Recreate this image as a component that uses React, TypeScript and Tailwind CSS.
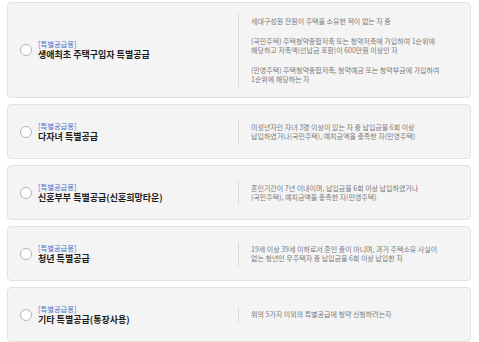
interface ItemProps {
  title: string;
  desc: string[][];
}

const items: ItemProps[] = [
  {
    title: "생애최초 주택구입자 특별공급",
    desc: [
      ["세대구성원 전원이 주택을 소유한 적이 없는 자 중"],
      [
        "(국민주택) 주택청약종합저축 또는 청약저축에 가입하여 1순위에",
        "해당하고 저축액(선납금 포함)이 600만원 이상인 자",
      ],
      [
        "(민영주택) 주택청약종합저축, 청약예금 또는 청약부금에 가입하여",
        "1순위에 해당하는 자",
      ],
    ],
  },
  {
    title: "다자녀 특별공급",
    desc: [
      [
        "미성년자인 자녀 3명 이상이 있는 자 중 납입금을 6회 이상",
        "납입하였거나(국민주택), 예치금액을 충족한 자(민영주택)",
      ],
    ],
  },
  {
    title: "신혼부부 특별공급(신혼희망타운)",
    desc: [
      [
        "혼인기간이 7년 이내이며, 납입금을 6회 이상 납입하였거나",
        "(국민주택), 예치금액을 충족한 자(민영주택)",
      ],
    ],
  },
  {
    title: "청년 특별공급",
    desc: [
      [
        "19세 이상 39세 이하로서 혼인 중이 아니며, 과거 주택소유 사실이",
        "없는 청년인 무주택자 중 납입금을 6회 이상 납입한 자",
      ],
    ],
  },
  {
    title: "기타 특별공급(통장사용)",
    desc: [["위의 5가지 이외의 특별공급에 청약 신청하려는자"]],
  },
];

function Radio() {
  return (
    <span className="w-[12px] h-[12px] rounded-full border border-[#b5b5b5] bg-white shrink-0" />
  );
}

function Card({ title, desc }: ItemProps) {
  return (
    <label className="flex items-center min-h-[55px] py-[14px] bg-[#f4f4f4] border border-[#e2e2e2] rounded-[4px]">
      <div className="flex items-center w-[230px] shrink-0 pl-[12px] gap-[6px]">
        <Radio />
        <div>
          <p className="text-[7.3px] leading-[10px] text-[#4d73c9]">[특별공급용]</p>
          <p className="text-[9px] leading-[12px] font-bold text-[#1e1e1e]">{title}</p>
        </div>
      </div>
      <div className="border-l border-[#dcdcdc] pl-[12px] py-[3px] flex flex-col gap-[11px] text-[7px] leading-[9px] text-[#7a7a7a]">
        {desc.map((para, i) => (
          <p key={i}>
            {para.map((line, j) => (
              <span key={j} className="block">
                {line}
              </span>
            ))}
          </p>
        ))}
      </div>
    </label>
  );
}

export default function App() {
  return (
    <main
      className="w-[479px] h-[342px] bg-white flex flex-col gap-[6px] pt-[2px] pl-[7px] pr-[8px]"
      style={{ fontFamily: '"Noto Sans CJK KR", "Noto Sans", sans-serif' }}
    >
      {items.map((item) => (
        <Card key={item.title} title={item.title} desc={item.desc} />
      ))}
    </main>
  );
}
